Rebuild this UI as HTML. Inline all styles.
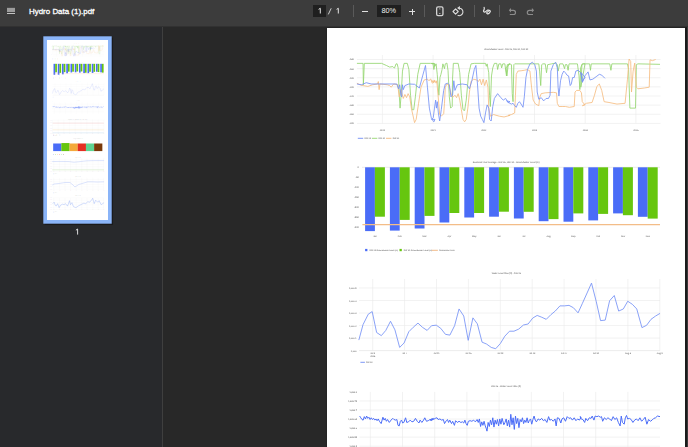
<!DOCTYPE html>
<html><head><meta charset="utf-8"><style>
html,body{margin:0;padding:0;}
body{width:688px;height:447px;overflow:hidden;position:relative;background:#282828;font-family:"Liberation Sans",sans-serif;}
#tb{position:absolute;left:0;top:0;width:688px;height:26px;background:#3c3c3c;z-index:5;}
#tbl{position:absolute;left:0;top:26px;width:688px;height:1px;background:#313131;z-index:5;}
#side{position:absolute;left:0;top:26px;width:162px;height:421px;background:#28292c;}
#div{position:absolute;left:162px;top:26px;width:1px;height:421px;background:#3f3f3f;}
#main{position:absolute;left:163px;top:26px;width:525px;height:421px;background:#282828;overflow:hidden;}
#page{position:absolute;left:164px;top:2px;width:358px;height:1055px;background:#fff;box-shadow:0 0 1.5px 0.5px rgba(0,0,0,.6);}
#thumbb{position:absolute;left:46.9px;top:13.9px;width:61.3px;height:180.6px;box-shadow:0 0 0 3.7px #8ab4f8, 0 0 1px 4.5px rgba(0,0,0,.35);background:#fff;}
.t{position:absolute;color:#fff;font-size:8px;line-height:8px;white-space:nowrap;}
svg text{font-family:"Liberation Sans",sans-serif;text-rendering:geometricPrecision;}
</style></head><body>
<svg width="0" height="0" style="position:absolute"><defs><g id="pg">
<text transform="translate(179.20,21.90) scale(0.1)" font-size="22.4" text-anchor="middle" fill="#7c7c7c" stroke="#7c7c7c" stroke-width="0.5">Groundwater Level - DW 26, DW 31, DW 32</text>
<line x1="30.00" y1="31.50" x2="333.50" y2="31.50" stroke="#e9e9e9" stroke-width="0.6"/>
<text transform="translate(26.90,32.40) scale(0.1)" font-size="23.0" text-anchor="end" fill="#7c7c7c" stroke="#7c7c7c" stroke-width="0.5">-140</text>
<line x1="30.00" y1="40.63" x2="333.50" y2="40.63" stroke="#e9e9e9" stroke-width="0.6"/>
<text transform="translate(26.90,41.53) scale(0.1)" font-size="23.0" text-anchor="end" fill="#7c7c7c" stroke="#7c7c7c" stroke-width="0.5">-160</text>
<line x1="30.00" y1="49.76" x2="333.50" y2="49.76" stroke="#e9e9e9" stroke-width="0.6"/>
<text transform="translate(26.90,50.66) scale(0.1)" font-size="23.0" text-anchor="end" fill="#7c7c7c" stroke="#7c7c7c" stroke-width="0.5">-180</text>
<line x1="30.00" y1="58.89" x2="333.50" y2="58.89" stroke="#e9e9e9" stroke-width="0.6"/>
<text transform="translate(26.90,59.79) scale(0.1)" font-size="23.0" text-anchor="end" fill="#7c7c7c" stroke="#7c7c7c" stroke-width="0.5">-200</text>
<line x1="30.00" y1="68.02" x2="333.50" y2="68.02" stroke="#e9e9e9" stroke-width="0.6"/>
<text transform="translate(26.90,68.92) scale(0.1)" font-size="23.0" text-anchor="end" fill="#7c7c7c" stroke="#7c7c7c" stroke-width="0.5">-220</text>
<line x1="30.00" y1="77.15" x2="333.50" y2="77.15" stroke="#e9e9e9" stroke-width="0.6"/>
<text transform="translate(26.90,78.05) scale(0.1)" font-size="23.0" text-anchor="end" fill="#7c7c7c" stroke="#7c7c7c" stroke-width="0.5">-240</text>
<line x1="30.00" y1="86.28" x2="333.50" y2="86.28" stroke="#e9e9e9" stroke-width="0.6"/>
<text transform="translate(26.90,87.18) scale(0.1)" font-size="23.0" text-anchor="end" fill="#7c7c7c" stroke="#7c7c7c" stroke-width="0.5">-260</text>
<line x1="30.00" y1="95.41" x2="333.50" y2="95.41" stroke="#e9e9e9" stroke-width="0.6"/>
<text transform="translate(26.90,96.31) scale(0.1)" font-size="23.0" text-anchor="end" fill="#7c7c7c" stroke="#7c7c7c" stroke-width="0.5">-280</text>
<line x1="55.40" y1="27.00" x2="55.40" y2="95.40" stroke="#e9e9e9" stroke-width="0.6"/>
<text transform="translate(55.40,102.50) scale(0.1)" font-size="23.0" text-anchor="middle" fill="#7c7c7c" stroke="#7c7c7c" stroke-width="0.5">2020</text>
<line x1="106.10" y1="27.00" x2="106.10" y2="95.40" stroke="#e9e9e9" stroke-width="0.6"/>
<text transform="translate(106.10,102.50) scale(0.1)" font-size="23.0" text-anchor="middle" fill="#7c7c7c" stroke="#7c7c7c" stroke-width="0.5">2021</text>
<line x1="156.80" y1="27.00" x2="156.80" y2="95.40" stroke="#e9e9e9" stroke-width="0.6"/>
<text transform="translate(156.80,102.50) scale(0.1)" font-size="23.0" text-anchor="middle" fill="#7c7c7c" stroke="#7c7c7c" stroke-width="0.5">2022</text>
<line x1="207.50" y1="27.00" x2="207.50" y2="95.40" stroke="#e9e9e9" stroke-width="0.6"/>
<text transform="translate(207.50,102.50) scale(0.1)" font-size="23.0" text-anchor="middle" fill="#7c7c7c" stroke="#7c7c7c" stroke-width="0.5">2023</text>
<line x1="258.20" y1="27.00" x2="258.20" y2="95.40" stroke="#e9e9e9" stroke-width="0.6"/>
<text transform="translate(258.20,102.50) scale(0.1)" font-size="23.0" text-anchor="middle" fill="#7c7c7c" stroke="#7c7c7c" stroke-width="0.5">2024</text>
<line x1="308.90" y1="27.00" x2="308.90" y2="95.40" stroke="#e9e9e9" stroke-width="0.6"/>
<text transform="translate(308.90,102.50) scale(0.1)" font-size="23.0" text-anchor="middle" fill="#7c7c7c" stroke="#7c7c7c" stroke-width="0.5">2025</text>
<path d="M29.93,35.37 L36.05,35.37 L36.37,56.78 L37.34,35.37 L54.56,35.37 L59.39,37.46 L62.61,39.07 L65.83,38.59 L67.44,40.20 L69.05,35.85 L70.17,35.85 L71.14,39.88 L72.27,67.24 L73.07,80.12 L74.36,64.02 L75.48,43.10 L77.09,35.37 L80.31,35.37 L81.92,41.49 L83.53,67.24 L85.14,81.73 L86.75,81.73 L88.36,68.85 L90.78,46.32 L93.19,35.37 L103.65,35.37 L106.07,35.85 L106.87,41.49 L108.00,35.85 L104.61,35.37 L107.02,35.37 L107.83,38.27 L109.12,35.85 L110.24,46.32 L111.85,67.24 L112.98,49.54 L113.95,46.32 L115.07,41.49 L115.88,35.85 L117.49,40.68 L118.29,35.85 L119.90,35.05 L121.03,42.29 L122.32,68.85 L123.60,80.12 L125.21,78.51 L125.54,51.14 L126.34,35.37 L131.17,35.37 L132.78,44.71 L134.39,67.24 L136.00,81.73 L137.61,82.53 L139.22,72.07 L141.63,46.32 L144.05,35.85 L147.27,35.37 L158.53,35.37 L159.34,38.27 L160.14,35.85 L161.75,44.71 L162.56,67.24 L163.36,78.51 L164.49,47.93 L165.78,39.88 L167.39,35.37 L169.80,35.37 L170.61,41.49 L171.89,35.85 L173.82,35.85 L174.63,39.88 L175.76,35.85 L177.85,35.85 L179.46,47.93 L180.26,36.66 L183.00,35.85 L178.80,39.88 L179.93,47.93 L181.22,36.66 L182.83,35.85 L184.44,36.66 L185.24,65.63 L186.05,73.68 L186.85,36.66 L187.66,35.85 L211.80,35.85 L212.61,43.10 L213.73,57.58 L214.70,36.66 L215.83,35.85 L218.24,35.85 L219.53,44.71 L220.66,36.66 L224.68,35.85 L228.70,35.05 L230.31,36.66 L231.12,43.10 L232.73,35.85 L235.95,35.85 L237.56,40.68 L238.36,36.66 L239.97,36.66 L241.10,42.29 L242.06,35.85 L250.43,35.85 L252.04,47.93 L252.85,61.61 L253.65,39.88 L255.26,35.85 L258.00,35.85 L253.80,59.19 L254.93,36.66 L256.22,35.85 L262.66,35.85 L263.46,42.29 L264.27,35.85 L282.78,35.85 L283.91,42.29 L284.87,35.85 L300.48,35.85 L301.61,41.49 L302.90,80.12 L308.53,80.12 L309.34,36.66 L310.95,35.85 L333.00,36.34" fill="none" stroke="#95d670" stroke-width="0.85" stroke-linejoin="round"/>
<path d="M29.93,55.17 L32.83,56.78 L36.05,57.58 L40.88,58.39 L45.71,56.78 L50.54,55.97 L51.34,53.56 L52.14,61.61 L52.95,55.97 L60.19,56.78 L62.61,57.58 L64.22,59.19 L66.63,55.97 L70.66,56.78 L72.27,68.85 L73.88,61.61 L76.29,70.46 L77.90,66.44 L79.51,69.66 L81.12,65.63 L82.73,68.85 L84.34,80.12 L87.56,94.61 L89.17,91.39 L91.58,75.29 L94.00,59.19 L97.22,51.95 L100.43,51.14 L102.04,52.75 L103.65,50.82 L105.26,55.17 L108.00,53.56 L104.61,52.75 L106.22,54.36 L107.51,51.95 L109.12,55.17 L109.76,52.75 L111.05,67.24 L112.66,86.56 L114.27,88.17 L116.68,85.75 L117.49,75.29 L118.29,59.19 L119.90,55.97 L121.51,56.78 L123.12,61.61 L124.73,68.05 L126.34,68.85 L127.95,67.24 L129.56,69.66 L131.17,65.63 L132.78,72.07 L134.39,81.73 L136.00,91.39 L137.61,93.80 L139.22,91.39 L140.83,80.12 L142.44,64.02 L144.05,53.56 L146.46,51.14 L149.68,51.95 L151.29,53.56 L152.90,51.14 L154.51,56.78 L156.12,51.14 L157.73,57.58 L159.34,51.95 L160.95,59.19 L161.75,80.12 L163.36,88.17 L166.58,86.56 L172.22,88.17 L177.04,88.97 L183.00,87.36 L181.22,87.36 L184.44,86.56 L187.66,84.95 L188.46,67.24 L189.27,46.32 L190.88,43.10 L194.10,42.77 L197.32,42.29 L200.54,41.49 L202.95,43.10 L204.56,59.19 L206.17,72.07 L208.58,76.09 L211.80,77.70 L212.61,69.66 L214.22,65.63 L218.24,64.83 L226.29,64.34 L229.51,64.83 L230.31,75.29 L231.92,78.51 L235.14,78.51 L238.36,78.51 L242.39,79.31 L247.22,78.51 L248.02,64.02 L249.63,62.41 L252.85,62.41 L254.46,64.83 L255.26,73.68 L258.00,76.90 L255.41,77.70 L259.44,75.29 L265.07,74.48 L267.49,67.24 L269.90,58.39 L272.32,55.97 L274.73,62.41 L277.14,73.68 L281.97,74.48 L290.02,76.09 L298.07,75.29 L300.48,51.14 L302.09,31.02 L303.70,33.44 L304.51,64.02 L306.12,43.10 L307.73,35.05 L309.34,59.19 L310.95,60.80 L317.39,60.00 L322.22,59.19 L323.02,31.83 L325.43,32.63 L328.65,31.51" fill="none" stroke="#f6bd82" stroke-width="0.85" stroke-linejoin="round"/>
<path d="M29.93,55.97 L34.44,56.78 L39.27,54.69 L44.10,55.97 L69.85,55.97 L71.46,60.80 L72.75,56.78 L73.88,67.24 L74.68,68.85 L75.48,56.78 L76.29,61.61 L77.90,57.58 L81.92,55.97 L87.56,56.30 L92.39,60.00 L95.61,47.93 L98.50,37.46 L100.43,59.19 L102.37,80.12 L104.46,90.58 L106.87,93.80 L108.00,91.39 L104.61,91.39 L106.22,89.78 L107.51,80.12 L108.63,72.07 L109.44,80.12 L110.24,73.68 L111.37,84.95 L112.66,93.00 L114.27,81.73 L116.68,62.41 L118.29,55.97 L120.71,55.17 L122.32,56.78 L123.93,68.85 L125.54,67.24 L126.82,52.75 L127.95,62.41 L130.36,56.78 L135.19,55.97 L140.02,56.78 L142.44,60.80 L144.85,52.75 L147.27,41.49 L148.88,37.46 L150.48,55.97 L152.09,80.12 L153.70,88.17 L155.31,91.39 L156.92,94.61 L158.53,84.95 L160.14,76.90 L161.75,80.12 L162.56,91.39 L164.17,93.00 L165.78,78.51 L167.39,70.46 L170.61,65.63 L173.82,69.66 L176.24,72.07 L178.65,70.46 L181.07,74.48 L183.00,73.68 L179.61,72.88 L181.22,74.48 L182.83,75.29 L184.44,76.09 L186.05,75.29 L187.66,77.70 L189.27,79.31 L190.88,75.29 L192.49,73.68 L194.10,76.09 L196.03,79.31 L197.32,68.85 L198.93,49.54 L200.54,41.49 L202.95,35.85 L205.36,34.24 L207.78,36.66 L209.39,43.10 L210.19,64.02 L211.80,71.27 L214.22,69.66 L216.63,72.88 L219.05,70.46 L221.46,70.46 L223.07,67.24 L223.88,43.10 L226.29,36.66 L228.70,34.24 L230.31,39.88 L231.12,59.19 L231.92,68.05 L233.53,52.75 L235.14,46.32 L236.75,43.10 L238.36,44.71 L239.97,47.12 L241.58,47.93 L243.19,57.58 L244.32,55.97 L245.61,49.54 L247.22,49.54 L248.82,43.10 L251.24,42.29 L253.65,44.71 L255.26,53.56 L258.00,49.54 L254.29,44.71 L255.41,54.36 L257.83,47.93 L261.05,43.90 L262.98,51.95 L265.88,51.14 L269.10,48.73 L272.32,46.32 L274.73,47.12 L277.95,50.34" fill="none" stroke="#7591f5" stroke-width="0.85" stroke-linejoin="round"/>
<line x1="30.80" y1="110.30" x2="36.20" y2="110.30" stroke="#6e8cf5" stroke-width="0.9"/>
<text transform="translate(37.50,111.10) scale(0.1)" font-size="21.0" text-anchor="start" fill="#7c7c7c" stroke="#7c7c7c" stroke-width="0.5">DW 26</text>
<line x1="44.90" y1="110.30" x2="50.30" y2="110.30" stroke="#95d670" stroke-width="0.9"/>
<text transform="translate(51.60,111.10) scale(0.1)" font-size="21.0" text-anchor="start" fill="#7c7c7c" stroke="#7c7c7c" stroke-width="0.5">DW 31</text>
<line x1="59.00" y1="110.30" x2="64.40" y2="110.30" stroke="#f5b97a" stroke-width="0.9"/>
<text transform="translate(65.70,111.10) scale(0.1)" font-size="21.0" text-anchor="start" fill="#7c7c7c" stroke="#7c7c7c" stroke-width="0.5">DW 32</text>
<text transform="translate(179.10,134.60) scale(0.1)" font-size="23.0" text-anchor="middle" fill="#7c7c7c" stroke="#7c7c7c" stroke-width="0.5">Seasonal Year Average - DW 26, DW 31 - Groundwater Level (m)</text>
<text transform="translate(32.00,140.30) scale(0.1)" font-size="25.0" text-anchor="end" fill="#7c7c7c" stroke="#7c7c7c" stroke-width="0.5">0</text>
<text transform="translate(32.00,150.20) scale(0.1)" font-size="25.0" text-anchor="end" fill="#7c7c7c" stroke="#7c7c7c" stroke-width="0.5">-50</text>
<text transform="translate(32.00,160.10) scale(0.1)" font-size="25.0" text-anchor="end" fill="#7c7c7c" stroke="#7c7c7c" stroke-width="0.5">-100</text>
<text transform="translate(32.00,170.00) scale(0.1)" font-size="25.0" text-anchor="end" fill="#7c7c7c" stroke="#7c7c7c" stroke-width="0.5">-150</text>
<text transform="translate(32.00,179.90) scale(0.1)" font-size="25.0" text-anchor="end" fill="#7c7c7c" stroke="#7c7c7c" stroke-width="0.5">-200</text>
<text transform="translate(32.00,189.80) scale(0.1)" font-size="25.0" text-anchor="end" fill="#7c7c7c" stroke="#7c7c7c" stroke-width="0.5">-250</text>
<text transform="translate(32.00,199.70) scale(0.1)" font-size="25.0" text-anchor="end" fill="#7c7c7c" stroke="#7c7c7c" stroke-width="0.5">-300</text>
<line x1="35.00" y1="139.30" x2="333.00" y2="139.30" stroke="#dddddd" stroke-width="0.6"/>
<rect x="38.10" y="139.30" width="9.8" height="63.80" fill="#4a6cf7"/>
<rect x="47.90" y="139.30" width="10" height="49.40" fill="#66c60f"/>
<text transform="translate(48.00,208.80) scale(0.1)" font-size="23.0" text-anchor="middle" fill="#7c7c7c" stroke="#7c7c7c" stroke-width="0.5">Jan</text>
<rect x="62.90" y="139.30" width="9.8" height="63.30" fill="#4a6cf7"/>
<rect x="72.70" y="139.30" width="10" height="52.60" fill="#66c60f"/>
<text transform="translate(72.80,208.80) scale(0.1)" font-size="23.0" text-anchor="middle" fill="#7c7c7c" stroke="#7c7c7c" stroke-width="0.5">Feb</text>
<rect x="87.70" y="139.30" width="9.8" height="61.20" fill="#4a6cf7"/>
<rect x="97.50" y="139.30" width="10" height="48.60" fill="#66c60f"/>
<text transform="translate(97.60,208.80) scale(0.1)" font-size="23.0" text-anchor="middle" fill="#7c7c7c" stroke="#7c7c7c" stroke-width="0.5">Mar</text>
<rect x="112.50" y="139.30" width="9.8" height="55.20" fill="#4a6cf7"/>
<rect x="122.30" y="139.30" width="10" height="45.70" fill="#66c60f"/>
<text transform="translate(122.40,208.80) scale(0.1)" font-size="23.0" text-anchor="middle" fill="#7c7c7c" stroke="#7c7c7c" stroke-width="0.5">Apr</text>
<rect x="137.30" y="139.30" width="9.8" height="50.20" fill="#4a6cf7"/>
<rect x="147.10" y="139.30" width="10" height="45.70" fill="#66c60f"/>
<text transform="translate(147.20,208.80) scale(0.1)" font-size="23.0" text-anchor="middle" fill="#7c7c7c" stroke="#7c7c7c" stroke-width="0.5">May</text>
<rect x="162.10" y="139.30" width="9.8" height="49.40" fill="#4a6cf7"/>
<rect x="171.90" y="139.30" width="10" height="44.40" fill="#66c60f"/>
<text transform="translate(172.00,208.80) scale(0.1)" font-size="23.0" text-anchor="middle" fill="#7c7c7c" stroke="#7c7c7c" stroke-width="0.5">Jun</text>
<rect x="186.90" y="139.30" width="9.8" height="51.20" fill="#4a6cf7"/>
<rect x="196.70" y="139.30" width="10" height="44.50" fill="#66c60f"/>
<text transform="translate(196.80,208.80) scale(0.1)" font-size="23.0" text-anchor="middle" fill="#7c7c7c" stroke="#7c7c7c" stroke-width="0.5">Jul</text>
<rect x="211.70" y="139.30" width="9.8" height="53.90" fill="#4a6cf7"/>
<rect x="221.50" y="139.30" width="10" height="51.80" fill="#66c60f"/>
<text transform="translate(221.60,208.80) scale(0.1)" font-size="23.0" text-anchor="middle" fill="#7c7c7c" stroke="#7c7c7c" stroke-width="0.5">Aug</text>
<rect x="236.50" y="139.30" width="9.8" height="54.40" fill="#4a6cf7"/>
<rect x="246.30" y="139.30" width="10" height="46.10" fill="#66c60f"/>
<text transform="translate(246.40,208.80) scale(0.1)" font-size="23.0" text-anchor="middle" fill="#7c7c7c" stroke="#7c7c7c" stroke-width="0.5">Sep</text>
<rect x="261.30" y="139.30" width="9.8" height="53.10" fill="#4a6cf7"/>
<rect x="271.10" y="139.30" width="10" height="46.60" fill="#66c60f"/>
<text transform="translate(271.20,208.80) scale(0.1)" font-size="23.0" text-anchor="middle" fill="#7c7c7c" stroke="#7c7c7c" stroke-width="0.5">Oct</text>
<rect x="286.10" y="139.30" width="9.8" height="46.10" fill="#4a6cf7"/>
<rect x="295.90" y="139.30" width="10" height="47.90" fill="#66c60f"/>
<text transform="translate(296.00,208.80) scale(0.1)" font-size="23.0" text-anchor="middle" fill="#7c7c7c" stroke="#7c7c7c" stroke-width="0.5">Nov</text>
<rect x="310.90" y="139.30" width="9.8" height="49.50" fill="#4a6cf7"/>
<rect x="320.70" y="139.30" width="10" height="51.30" fill="#66c60f"/>
<text transform="translate(320.80,208.80) scale(0.1)" font-size="23.0" text-anchor="middle" fill="#7c7c7c" stroke="#7c7c7c" stroke-width="0.5">Dec</text>
<line x1="35.40" y1="196.60" x2="333.00" y2="196.60" stroke="#f3bd88" stroke-width="1.2"/>
<rect x="38.10000000000002" y="220.9" width="2.3" height="2.3" fill="#4a6cf7"/>
<text transform="translate(42.50,223.00) scale(0.1)" font-size="21.0" text-anchor="start" fill="#7c7c7c" stroke="#7c7c7c" stroke-width="0.5">DW 26 Groundwater Level (m)</text>
<rect x="72.5" y="220.9" width="2.3" height="2.3" fill="#66c60f"/>
<text transform="translate(76.80,223.00) scale(0.1)" font-size="21.0" text-anchor="start" fill="#7c7c7c" stroke="#7c7c7c" stroke-width="0.5">DW 31 Groundwater Level (m)</text>
<line x1="104.80" y1="222.30" x2="110.90" y2="222.30" stroke="#f0b27c" stroke-width="0.9"/>
<text transform="translate(112.10,223.00) scale(0.1)" font-size="21.0" text-anchor="start" fill="#7c7c7c" stroke="#7c7c7c" stroke-width="0.5">Abstraction Limit</text>
<text transform="translate(179.30,246.30) scale(0.1)" font-size="22.4" text-anchor="middle" fill="#7c7c7c" stroke="#7c7c7c" stroke-width="0.5">Water Level Rise (ft) - DW 26</text>
<line x1="32.00" y1="260.00" x2="333.00" y2="260.00" stroke="#e9e9e9" stroke-width="0.6"/>
<text transform="translate(29.50,261.00) scale(0.1)" font-size="22.5" text-anchor="end" fill="#7c7c7c" stroke="#7c7c7c" stroke-width="0.5">1,000.5</text>
<line x1="32.00" y1="272.52" x2="333.00" y2="272.52" stroke="#e9e9e9" stroke-width="0.6"/>
<text transform="translate(29.50,273.52) scale(0.1)" font-size="22.5" text-anchor="end" fill="#7c7c7c" stroke="#7c7c7c" stroke-width="0.5">1,000.4</text>
<line x1="32.00" y1="285.04" x2="333.00" y2="285.04" stroke="#e9e9e9" stroke-width="0.6"/>
<text transform="translate(29.50,286.04) scale(0.1)" font-size="22.5" text-anchor="end" fill="#7c7c7c" stroke="#7c7c7c" stroke-width="0.5">1,000.3</text>
<line x1="32.00" y1="297.56" x2="333.00" y2="297.56" stroke="#e9e9e9" stroke-width="0.6"/>
<text transform="translate(29.50,298.56) scale(0.1)" font-size="22.5" text-anchor="end" fill="#7c7c7c" stroke="#7c7c7c" stroke-width="0.5">1,000.2</text>
<line x1="32.00" y1="310.08" x2="333.00" y2="310.08" stroke="#e9e9e9" stroke-width="0.6"/>
<text transform="translate(29.50,311.08) scale(0.1)" font-size="22.5" text-anchor="end" fill="#7c7c7c" stroke="#7c7c7c" stroke-width="0.5">1,000.1</text>
<line x1="32.00" y1="322.60" x2="333.00" y2="322.60" stroke="#e9e9e9" stroke-width="0.6"/>
<text transform="translate(29.50,323.60) scale(0.1)" font-size="22.5" text-anchor="end" fill="#7c7c7c" stroke="#7c7c7c" stroke-width="0.5">1,000</text>
<line x1="32.00" y1="322.60" x2="333.00" y2="322.60" stroke="#e9e9e9" stroke-width="0.6"/>
<line x1="45.70" y1="251.00" x2="45.70" y2="322.60" stroke="#e9e9e9" stroke-width="0.6"/>
<text transform="translate(45.70,326.20) scale(0.1)" font-size="23.0" text-anchor="middle" fill="#7c7c7c" stroke="#7c7c7c" stroke-width="0.5">Jul 3</text>
<line x1="77.60" y1="251.00" x2="77.60" y2="322.60" stroke="#e9e9e9" stroke-width="0.6"/>
<text transform="translate(77.60,326.20) scale(0.1)" font-size="23.0" text-anchor="middle" fill="#7c7c7c" stroke="#7c7c7c" stroke-width="0.5">Jul 7</text>
<line x1="109.50" y1="251.00" x2="109.50" y2="322.60" stroke="#e9e9e9" stroke-width="0.6"/>
<text transform="translate(109.50,326.20) scale(0.1)" font-size="23.0" text-anchor="middle" fill="#7c7c7c" stroke="#7c7c7c" stroke-width="0.5">Jul 11</text>
<line x1="141.40" y1="251.00" x2="141.40" y2="322.60" stroke="#e9e9e9" stroke-width="0.6"/>
<text transform="translate(141.40,326.20) scale(0.1)" font-size="23.0" text-anchor="middle" fill="#7c7c7c" stroke="#7c7c7c" stroke-width="0.5">Jul 15</text>
<line x1="173.30" y1="251.00" x2="173.30" y2="322.60" stroke="#e9e9e9" stroke-width="0.6"/>
<text transform="translate(173.30,326.20) scale(0.1)" font-size="23.0" text-anchor="middle" fill="#7c7c7c" stroke="#7c7c7c" stroke-width="0.5">Jul 19</text>
<line x1="205.20" y1="251.00" x2="205.20" y2="322.60" stroke="#e9e9e9" stroke-width="0.6"/>
<text transform="translate(205.20,326.20) scale(0.1)" font-size="23.0" text-anchor="middle" fill="#7c7c7c" stroke="#7c7c7c" stroke-width="0.5">Jul 23</text>
<line x1="237.10" y1="251.00" x2="237.10" y2="322.60" stroke="#e9e9e9" stroke-width="0.6"/>
<text transform="translate(237.10,326.20) scale(0.1)" font-size="23.0" text-anchor="middle" fill="#7c7c7c" stroke="#7c7c7c" stroke-width="0.5">Jul 27</text>
<line x1="269.00" y1="251.00" x2="269.00" y2="322.60" stroke="#e9e9e9" stroke-width="0.6"/>
<text transform="translate(269.00,326.20) scale(0.1)" font-size="23.0" text-anchor="middle" fill="#7c7c7c" stroke="#7c7c7c" stroke-width="0.5">Jul 31</text>
<line x1="300.90" y1="251.00" x2="300.90" y2="322.60" stroke="#e9e9e9" stroke-width="0.6"/>
<text transform="translate(300.90,326.20) scale(0.1)" font-size="23.0" text-anchor="middle" fill="#7c7c7c" stroke="#7c7c7c" stroke-width="0.5">Aug 4</text>
<line x1="332.80" y1="251.00" x2="332.80" y2="322.60" stroke="#e9e9e9" stroke-width="0.6"/>
<text transform="translate(332.80,326.20) scale(0.1)" font-size="23.0" text-anchor="middle" fill="#7c7c7c" stroke="#7c7c7c" stroke-width="0.5">Aug 8</text>
<text transform="translate(45.70,329.20) scale(0.1)" font-size="23.0" text-anchor="middle" fill="#7c7c7c" stroke="#7c7c7c" stroke-width="0.5">2024</text>
<path d="M31.84,312.09 L36.02,296.65 L41.26,286.19 L45.18,283.57 L49.63,304.50 L54.34,307.64 L58.79,302.41 L63.50,293.25 L67.95,301.89 L72.65,319.42 L77.10,314.97 L81.81,303.72 L86.26,299.27 L90.97,295.08 L95.42,299.27 L100.13,302.41 L104.58,297.70 L109.28,297.18 L113.73,300.32 L118.44,306.34 L122.89,307.12 L127.60,297.70 L132.05,280.96 L136.76,288.02 L141.21,312.35 L145.91,289.85 L150.36,295.87 L155.07,314.18 L159.52,316.02 L164.23,319.42 L168.68,320.73 L173.39,315.49 L177.84,308.17 L182.54,303.20 L186.99,303.20 L191.70,301.10 L196.45,297.03 L201.11,295.99 L205.77,290.04 L210.17,287.45 L214.82,289.26 L219.22,291.33 L223.88,286.68 L228.28,283.05 L232.94,277.88 L237.33,277.88 L241.99,277.36 L246.39,279.69 L251.05,284.87 L255.45,275.29 L260.10,264.94 L264.50,255.11 L269.16,273.22 L273.56,292.63 L278.21,292.11 L282.61,272.71 L287.27,267.53 L291.67,283.05 L296.32,280.98 L300.72,273.22 L305.38,276.33 L309.78,280.98 L314.95,299.61 L319.61,297.28 L324.01,291.33 L328.67,287.97 L333.06,285.38" fill="none" stroke="#7591f5" stroke-width="0.85" stroke-linejoin="round"/>
<line x1="33.40" y1="334.30" x2="37.90" y2="334.30" stroke="#6e8cf5" stroke-width="0.9"/>
<text transform="translate(39.00,335.10) scale(0.1)" font-size="21.0" text-anchor="start" fill="#7c7c7c" stroke="#7c7c7c" stroke-width="0.5">DW 26</text>
<text transform="translate(179.00,359.00) scale(0.1)" font-size="23.0" text-anchor="middle" fill="#7c7c7c" stroke="#7c7c7c" stroke-width="0.5">DW 26 - Water Level Rise (ft)</text>
<text transform="translate(30.00,364.90) scale(0.1)" font-size="22.5" text-anchor="end" fill="#7c7c7c" stroke="#7c7c7c" stroke-width="0.5">1,333.8</text>
<line x1="32.50" y1="372.95" x2="333.00" y2="372.95" stroke="#e9e9e9" stroke-width="0.6"/>
<text transform="translate(30.00,373.95) scale(0.1)" font-size="22.5" text-anchor="end" fill="#7c7c7c" stroke="#7c7c7c" stroke-width="0.5">1,333.75</text>
<line x1="32.50" y1="382.00" x2="333.00" y2="382.00" stroke="#e9e9e9" stroke-width="0.6"/>
<text transform="translate(30.00,383.00) scale(0.1)" font-size="22.5" text-anchor="end" fill="#7c7c7c" stroke="#7c7c7c" stroke-width="0.5">1,333.7</text>
<line x1="32.50" y1="391.05" x2="333.00" y2="391.05" stroke="#e9e9e9" stroke-width="0.6"/>
<text transform="translate(30.00,392.05) scale(0.1)" font-size="22.5" text-anchor="end" fill="#7c7c7c" stroke="#7c7c7c" stroke-width="0.5">1,333.65</text>
<line x1="32.50" y1="400.10" x2="333.00" y2="400.10" stroke="#e9e9e9" stroke-width="0.6"/>
<text transform="translate(30.00,401.10) scale(0.1)" font-size="22.5" text-anchor="end" fill="#7c7c7c" stroke="#7c7c7c" stroke-width="0.5">1,333.6</text>
<line x1="32.50" y1="409.15" x2="333.00" y2="409.15" stroke="#e9e9e9" stroke-width="0.6"/>
<text transform="translate(30.00,410.15) scale(0.1)" font-size="22.5" text-anchor="end" fill="#7c7c7c" stroke="#7c7c7c" stroke-width="0.5">1,333.55</text>
<line x1="32.50" y1="418.20" x2="333.00" y2="418.20" stroke="#e9e9e9" stroke-width="0.6"/>
<text transform="translate(30.00,419.20) scale(0.1)" font-size="22.5" text-anchor="end" fill="#7c7c7c" stroke="#7c7c7c" stroke-width="0.5">1,333.5</text>
<line x1="43.30" y1="363.90" x2="43.30" y2="432.00" stroke="#e9e9e9" stroke-width="0.6"/>
<line x1="75.50" y1="363.90" x2="75.50" y2="432.00" stroke="#e9e9e9" stroke-width="0.6"/>
<line x1="107.70" y1="363.90" x2="107.70" y2="432.00" stroke="#e9e9e9" stroke-width="0.6"/>
<line x1="139.90" y1="363.90" x2="139.90" y2="432.00" stroke="#e9e9e9" stroke-width="0.6"/>
<line x1="172.10" y1="363.90" x2="172.10" y2="432.00" stroke="#e9e9e9" stroke-width="0.6"/>
<line x1="204.30" y1="363.90" x2="204.30" y2="432.00" stroke="#e9e9e9" stroke-width="0.6"/>
<line x1="236.50" y1="363.90" x2="236.50" y2="432.00" stroke="#e9e9e9" stroke-width="0.6"/>
<line x1="268.70" y1="363.90" x2="268.70" y2="432.00" stroke="#e9e9e9" stroke-width="0.6"/>
<line x1="300.90" y1="363.90" x2="300.90" y2="432.00" stroke="#e9e9e9" stroke-width="0.6"/>
<path d="M32.65,388.05 L33.81,389.79 L34.98,391.53 L36.14,392.12 L37.30,388.63 L38.47,390.95 L39.63,388.05 L40.79,390.37 L41.95,389.21 L43.12,391.53 L44.28,389.79 L45.44,391.53 L46.60,390.37 L47.77,392.12 L48.93,390.95 L50.09,392.70 L51.26,390.95 L52.42,393.28 L54.16,395.60 L55.91,389.21 L57.07,392.12 L58.23,390.37 L59.40,393.28 L60.56,391.53 L62.30,394.44 L64.05,392.12 L65.79,390.37 L66.95,391.53 L68.70,392.12 L69.86,391.53 L71.02,397.35 L72.19,397.93 L73.35,393.28 L74.51,392.12 L75.67,395.02 L76.84,394.44 L78.58,389.79 L79.74,394.44 L81.49,393.86 L83.23,392.12 L84.98,393.86 L86.72,393.28 L88.47,390.37 L90.21,393.28 L91.95,395.02 L93.12,392.12 L94.86,394.44 L96.60,392.12 L97.77,389.79 L99.51,393.28 L101.26,392.70 L103.00,391.53 L104.74,392.70 L106.49,390.37 L103.00,392.12 L104.74,390.95 L106.49,391.53 L108.23,390.37 L109.98,389.79 L111.14,391.53 L112.88,390.95 L114.63,392.12 L116.37,391.53 L117.53,395.60 L119.28,392.70 L120.44,391.53 L121.60,394.44 L122.77,392.12 L124.51,395.60 L125.67,393.28 L127.42,397.35 L128.58,392.70 L130.33,394.44 L132.07,393.28 L133.81,394.44 L135.56,393.86 L136.72,395.02 L137.88,392.12 L139.05,395.60 L140.21,397.35 L141.37,393.28 L143.12,392.70 L144.86,393.28 L146.60,392.12 L148.35,393.86 L150.09,391.53 L151.26,394.44 L152.42,390.95 L153.58,398.51 L154.74,393.86 L155.91,397.35 L157.07,393.28 L158.23,397.93 L159.40,400.84 L159.98,403.16 L161.14,394.44 L162.30,398.51 L163.47,392.12 L164.63,396.77 L165.79,389.79 L166.95,399.09 L168.12,392.12 L169.28,396.19 L170.44,391.53 L171.60,397.93 L172.77,390.95 L173.93,396.19 L175.09,390.37 L176.84,396.77 L178.00,394.44 L179.16,390.95 L180.33,397.93 L181.49,392.12 L182.65,399.09 L183.81,386.30 L184.98,396.77 L186.14,389.79 L187.30,401.42 L188.47,388.05 L189.63,395.60 L190.79,390.37 L191.95,399.67 L193.12,391.53 L194.28,393.86 L195.44,389.79 L196.60,395.60 L197.77,392.12 L198.93,394.44 L200.09,389.79 L201.26,395.02 L202.42,392.12 L203.58,390.95 L204.74,396.19 L205.91,391.53 L207.07,388.05 L208.23,392.12 L209.40,393.86 L211.14,390.95 L212.88,392.12 L214.63,390.37 L216.37,392.70 L218.12,391.53 L219.86,394.44 L221.60,388.63 L222.77,392.12 L224.51,391.53 L226.26,393.28 L228.00,390.95 L229.16,397.93 L230.33,389.79 L232.07,390.37 L233.81,395.02 L234.98,390.95 L236.72,389.79 L238.47,393.28 L240.21,388.63 L241.95,390.37 L243.70,389.79 L245.44,392.12 L247.19,389.79 L248.93,392.70 L250.67,390.95 L252.42,392.12 L254.16,389.21 L253.00,388.63 L254.16,390.95 L255.91,391.53 L257.65,394.44 L258.81,390.37 L260.56,392.70 L262.30,389.79 L264.05,390.37 L265.21,388.05 L266.95,392.12 L268.12,388.05 L269.86,388.63 L271.60,388.05 L273.35,389.21 L274.51,388.63 L275.67,393.28 L277.42,389.79 L279.16,391.53 L280.91,389.79 L282.65,390.95 L284.40,392.70 L286.14,388.63 L287.88,391.53 L289.63,389.79 L291.37,394.44 L293.12,397.93 L294.28,388.05 L295.44,394.44 L297.19,396.19 L298.35,389.79 L299.51,387.47 L300.67,390.95 L302.42,390.37 L304.16,391.53 L305.91,394.44 L307.65,392.12 L309.40,390.95 L311.14,392.70 L312.88,389.79 L314.63,393.28 L316.37,391.53 L318.12,389.21 L319.86,396.19 L321.60,391.53 L323.35,393.28 L325.09,392.12 L326.84,390.37 L328.58,389.79 L330.33,388.05 L333.00,388.63" fill="none" stroke="#4a6cf7" stroke-width="1.0" stroke-linejoin="round"/>
<text x="179.0" y="470.0" font-size="4.6" text-anchor="middle" fill="#a0a0a0">Groundwater Level Comparison - DW 26, DW 31, DW 32</text>
<line x1="33.0" y1="469.6" x2="332.0" y2="469.6" stroke="#eeeeee" stroke-width="1.0"/>
<text x="29.0" y="471.1" font-size="4.5" text-anchor="end" fill="#a0a0a0">1,000</text>
<line x1="33.0" y1="485.0" x2="332.0" y2="485.0" stroke="#eeeeee" stroke-width="1.0"/>
<text x="29.0" y="486.5" font-size="4.5" text-anchor="end" fill="#a0a0a0">1,000</text>
<line x1="33.0" y1="500.7" x2="332.0" y2="500.7" stroke="#eeeeee" stroke-width="1.0"/>
<text x="29.0" y="502.2" font-size="4.5" text-anchor="end" fill="#a0a0a0">1,000</text>
<line x1="33.0" y1="515.8" x2="332.0" y2="515.8" stroke="#eeeeee" stroke-width="1.0"/>
<text x="29.0" y="517.3" font-size="4.5" text-anchor="end" fill="#a0a0a0">1,000</text>
<line x1="33.0" y1="530.4" x2="332.0" y2="530.4" stroke="#eeeeee" stroke-width="1.0"/>
<text x="29.0" y="531.9" font-size="4.5" text-anchor="end" fill="#a0a0a0">1,000</text>
<line x1="33.0" y1="545.0" x2="332.0" y2="545.0" stroke="#eeeeee" stroke-width="1.0"/>
<text x="29.0" y="546.5" font-size="4.5" text-anchor="end" fill="#a0a0a0">1,000</text>
<line x1="33.0" y1="465.0" x2="33.0" y2="545.0" stroke="#eeeeee" stroke-width="1.0"/>
<line x1="66.2" y1="465.0" x2="66.2" y2="545.0" stroke="#eeeeee" stroke-width="1.0"/>
<line x1="99.4" y1="465.0" x2="99.4" y2="545.0" stroke="#eeeeee" stroke-width="1.0"/>
<line x1="132.6" y1="465.0" x2="132.6" y2="545.0" stroke="#eeeeee" stroke-width="1.0"/>
<line x1="165.8" y1="465.0" x2="165.8" y2="545.0" stroke="#eeeeee" stroke-width="1.0"/>
<line x1="199.0" y1="465.0" x2="199.0" y2="545.0" stroke="#eeeeee" stroke-width="1.0"/>
<line x1="232.2" y1="465.0" x2="232.2" y2="545.0" stroke="#eeeeee" stroke-width="1.0"/>
<line x1="265.4" y1="465.0" x2="265.4" y2="545.0" stroke="#eeeeee" stroke-width="1.0"/>
<line x1="298.6" y1="465.0" x2="298.6" y2="545.0" stroke="#eeeeee" stroke-width="1.0"/>
<line x1="331.8" y1="465.0" x2="331.8" y2="545.0" stroke="#eeeeee" stroke-width="1.0"/>
<path d="M33.0,485.7 L332.0,485.7" fill="none" stroke="#f2a8a8" stroke-width="1.7" stroke-linejoin="round"/>
<path d="M33.0,524.6 L332.0,524.6" fill="none" stroke="#f6d496" stroke-width="1.7" stroke-linejoin="round"/>
<path d="M33.0,542.0 L332.0,542.0" fill="none" stroke="#a6cdea" stroke-width="1.7" stroke-linejoin="round"/>
<line x1="36.0" y1="554.9" x2="41.0" y2="554.9" stroke="#f2a0a0" stroke-width="2"/>
<line x1="54.0" y1="554.9" x2="59.0" y2="554.9" stroke="#f6d08a" stroke-width="2"/>
<line x1="72.0" y1="554.9" x2="77.0" y2="554.9" stroke="#9cc8e8" stroke-width="2"/>
<text x="181.0" y="580.0" font-size="4.6" text-anchor="middle" fill="#a0a0a0">Average Groundwater Level</text>
<rect x="36.0" y="604.6" width="48.1" height="44.4" fill="#4a6cf7"/>
<rect x="83.8" y="602" width="48.1" height="47.0" fill="#66c60f"/>
<rect x="131.7" y="604.6" width="48.1" height="44.4" fill="#f4a93a"/>
<rect x="179.5" y="604.6" width="48.1" height="44.4" fill="#e52e22"/>
<rect x="227.3" y="604.6" width="48.1" height="44.4" fill="#5ed492"/>
<rect x="275.2" y="604.6" width="48.1" height="44.4" fill="#7a3a0a"/>
<rect x="36.0" y="666" width="3" height="3" fill="#4a6cf7"/>
<rect x="48.0" y="666" width="3" height="3" fill="#66c60f"/>
<rect x="60.0" y="666" width="3" height="3" fill="#f4a93a"/>
<rect x="72.0" y="666" width="3" height="3" fill="#e52e22"/>
<rect x="84.0" y="666" width="3" height="3" fill="#5ed492"/>
<rect x="96.0" y="666" width="3" height="3" fill="#7a3a0a"/>
<text x="181.0" y="689.0" font-size="4.8" text-anchor="middle" fill="#a0a0a0">Water Level (ft)</text>
<line x1="33.0" y1="696.8" x2="332.0" y2="696.8" stroke="#eeeeee" stroke-width="1.0"/>
<line x1="33.0" y1="711.4" x2="332.0" y2="711.4" stroke="#eeeeee" stroke-width="1.0"/>
<line x1="33.0" y1="725.5" x2="332.0" y2="725.5" stroke="#eeeeee" stroke-width="1.0"/>
<line x1="33.0" y1="740.1" x2="332.0" y2="740.1" stroke="#eeeeee" stroke-width="1.0"/>
<line x1="33.0" y1="754.7" x2="332.0" y2="754.7" stroke="#eeeeee" stroke-width="1.0"/>
<line x1="33.0" y1="768.7" x2="332.0" y2="768.7" stroke="#eeeeee" stroke-width="1.0"/>
<line x1="39.1" y1="691.6" x2="39.1" y2="768.7" stroke="#eeeeee" stroke-width="1.0"/>
<line x1="73.7" y1="691.6" x2="73.7" y2="768.7" stroke="#eeeeee" stroke-width="1.0"/>
<line x1="105.4" y1="691.6" x2="105.4" y2="768.7" stroke="#eeeeee" stroke-width="1.0"/>
<line x1="137.2" y1="691.6" x2="137.2" y2="768.7" stroke="#eeeeee" stroke-width="1.0"/>
<line x1="170.1" y1="691.6" x2="170.1" y2="768.7" stroke="#eeeeee" stroke-width="1.0"/>
<line x1="202.4" y1="691.6" x2="202.4" y2="768.7" stroke="#eeeeee" stroke-width="1.0"/>
<line x1="234.2" y1="691.6" x2="234.2" y2="768.7" stroke="#eeeeee" stroke-width="1.0"/>
<line x1="267.1" y1="691.6" x2="267.1" y2="768.7" stroke="#eeeeee" stroke-width="1.0"/>
<line x1="298.8" y1="691.6" x2="298.8" y2="768.7" stroke="#eeeeee" stroke-width="1.0"/>
<line x1="330.5" y1="691.6" x2="330.5" y2="768.7" stroke="#eeeeee" stroke-width="1.0"/>
<path d="M30.4,710.1 L70.8,709.5 L128.5,710.1 L157.4,714.1 L186.2,711.2 L232.4,705.5 L272.8,704.3 L333.4,704.3" fill="none" stroke="#8aa6f7" stroke-width="1.7" stroke-linejoin="round"/>
<path d="M30.4,758.6 L333.4,758.6" fill="none" stroke="#a8dc8a" stroke-width="1.7" stroke-linejoin="round"/>
<text x="181.0" y="799.0" font-size="4.8" text-anchor="middle" fill="#a0a0a0">Water Level (ft)</text>
<line x1="33.0" y1="815.4" x2="332.0" y2="815.4" stroke="#eeeeee" stroke-width="1.0"/>
<line x1="33.0" y1="829.4" x2="332.0" y2="829.4" stroke="#eeeeee" stroke-width="1.0"/>
<line x1="33.0" y1="844.0" x2="332.0" y2="844.0" stroke="#eeeeee" stroke-width="1.0"/>
<line x1="33.0" y1="858.6" x2="332.0" y2="858.6" stroke="#eeeeee" stroke-width="1.0"/>
<line x1="33.0" y1="872.7" x2="332.0" y2="872.7" stroke="#eeeeee" stroke-width="1.0"/>
<line x1="39.1" y1="805.5" x2="39.1" y2="875.6" stroke="#eeeeee" stroke-width="1.0"/>
<line x1="73.7" y1="805.5" x2="73.7" y2="875.6" stroke="#eeeeee" stroke-width="1.0"/>
<line x1="105.4" y1="805.5" x2="105.4" y2="875.6" stroke="#eeeeee" stroke-width="1.0"/>
<line x1="137.2" y1="805.5" x2="137.2" y2="875.6" stroke="#eeeeee" stroke-width="1.0"/>
<line x1="170.1" y1="805.5" x2="170.1" y2="875.6" stroke="#eeeeee" stroke-width="1.0"/>
<line x1="202.4" y1="805.5" x2="202.4" y2="875.6" stroke="#eeeeee" stroke-width="1.0"/>
<line x1="234.2" y1="805.5" x2="234.2" y2="875.6" stroke="#eeeeee" stroke-width="1.0"/>
<line x1="267.1" y1="805.5" x2="267.1" y2="875.6" stroke="#eeeeee" stroke-width="1.0"/>
<line x1="298.8" y1="805.5" x2="298.8" y2="875.6" stroke="#eeeeee" stroke-width="1.0"/>
<line x1="330.5" y1="805.5" x2="330.5" y2="875.6" stroke="#eeeeee" stroke-width="1.0"/>
<path d="M30.4,846.9 L41.9,841.1 L70.8,838.2 L105.4,832.4 L134.3,832.4 L151.6,846.9 L163.2,858.4 L186.2,844.0 L215.1,835.3 L238.2,828.4 L267.1,828.4 L295.9,829.6 L333.4,828.4" fill="none" stroke="#8aa6f7" stroke-width="1.8" stroke-linejoin="round"/>
<text x="181.0" y="909.0" font-size="4.8" text-anchor="middle" fill="#a0a0a0">Water Level (ft)</text>
<line x1="33.0" y1="922.9" x2="332.0" y2="922.9" stroke="#eeeeee" stroke-width="1.0"/>
<line x1="33.0" y1="935.7" x2="332.0" y2="935.7" stroke="#eeeeee" stroke-width="1.0"/>
<line x1="33.0" y1="950.4" x2="332.0" y2="950.4" stroke="#eeeeee" stroke-width="1.0"/>
<line x1="33.0" y1="963.8" x2="332.0" y2="963.8" stroke="#eeeeee" stroke-width="1.0"/>
<line x1="33.0" y1="977.2" x2="332.0" y2="977.2" stroke="#eeeeee" stroke-width="1.0"/>
<line x1="33.0" y1="990.7" x2="332.0" y2="990.7" stroke="#eeeeee" stroke-width="1.0"/>
<line x1="39.1" y1="922.9" x2="39.1" y2="990.7" stroke="#eeeeee" stroke-width="1.0"/>
<line x1="73.7" y1="922.9" x2="73.7" y2="990.7" stroke="#eeeeee" stroke-width="1.0"/>
<line x1="105.4" y1="922.9" x2="105.4" y2="990.7" stroke="#eeeeee" stroke-width="1.0"/>
<line x1="137.2" y1="922.9" x2="137.2" y2="990.7" stroke="#eeeeee" stroke-width="1.0"/>
<line x1="170.1" y1="922.9" x2="170.1" y2="990.7" stroke="#eeeeee" stroke-width="1.0"/>
<line x1="202.4" y1="922.9" x2="202.4" y2="990.7" stroke="#eeeeee" stroke-width="1.0"/>
<line x1="234.2" y1="922.9" x2="234.2" y2="990.7" stroke="#eeeeee" stroke-width="1.0"/>
<line x1="267.1" y1="922.9" x2="267.1" y2="990.7" stroke="#eeeeee" stroke-width="1.0"/>
<line x1="298.8" y1="922.9" x2="298.8" y2="990.7" stroke="#eeeeee" stroke-width="1.0"/>
<line x1="330.5" y1="922.9" x2="330.5" y2="990.7" stroke="#eeeeee" stroke-width="1.0"/>
<path d="M33.3,956.1 L41.9,947.4 L47.7,964.7 L53.5,970.5 L62.1,956.1 L70.8,979.2 L79.5,964.7 L91.0,959.0 L99.7,961.9 L108.3,956.1 L119.9,970.5 L131.4,938.8 L137.2,961.9 L145.8,950.3 L154.5,973.4 L168.9,979.2 L186.2,967.6 L203.6,959.0 L215.1,953.2 L226.6,956.1 L238.2,944.5 L249.7,947.4 L261.3,933.0 L267.1,924.3 L275.7,956.1 L284.4,935.9 L295.9,947.4 L304.6,938.8 L316.1,961.9 L324.8,956.1 L333.4,950.3" fill="none" stroke="#8aa6f7" stroke-width="2.2" stroke-linejoin="round"/>
<text x="29.0" y="698.3" font-size="4.5" text-anchor="end" fill="#a0a0a0">1,000</text>
<text x="29.0" y="712.9" font-size="4.5" text-anchor="end" fill="#a0a0a0">1,000</text>
<text x="29.0" y="727.0" font-size="4.5" text-anchor="end" fill="#a0a0a0">1,000</text>
<text x="29.0" y="741.6" font-size="4.5" text-anchor="end" fill="#a0a0a0">1,000</text>
<text x="29.0" y="756.2" font-size="4.5" text-anchor="end" fill="#a0a0a0">1,000</text>
<text x="29.0" y="770.2" font-size="4.5" text-anchor="end" fill="#a0a0a0">1,000</text>
<text x="29.0" y="816.9" font-size="4.5" text-anchor="end" fill="#a0a0a0">1,000</text>
<text x="29.0" y="830.9" font-size="4.5" text-anchor="end" fill="#a0a0a0">1,000</text>
<text x="29.0" y="845.5" font-size="4.5" text-anchor="end" fill="#a0a0a0">1,000</text>
<text x="29.0" y="860.1" font-size="4.5" text-anchor="end" fill="#a0a0a0">1,000</text>
<text x="29.0" y="874.2" font-size="4.5" text-anchor="end" fill="#a0a0a0">1,000</text>
<text x="29.0" y="924.4" font-size="4.5" text-anchor="end" fill="#a0a0a0">1,000</text>
<text x="29.0" y="937.2" font-size="4.5" text-anchor="end" fill="#a0a0a0">1,000</text>
<text x="29.0" y="951.9" font-size="4.5" text-anchor="end" fill="#a0a0a0">1,000</text>
<text x="29.0" y="965.3" font-size="4.5" text-anchor="end" fill="#a0a0a0">1,000</text>
<text x="29.0" y="978.7" font-size="4.5" text-anchor="end" fill="#a0a0a0">1,000</text>
<text x="29.0" y="992.2" font-size="4.5" text-anchor="end" fill="#a0a0a0">1,000</text>
<text x="39.1" y="769.7" font-size="4.2" text-anchor="middle" fill="#a0a0a0">Jul 1</text>
<text x="73.7" y="769.7" font-size="4.2" text-anchor="middle" fill="#a0a0a0">Jul 1</text>
<text x="105.4" y="769.7" font-size="4.2" text-anchor="middle" fill="#a0a0a0">Jul 1</text>
<text x="137.2" y="769.7" font-size="4.2" text-anchor="middle" fill="#a0a0a0">Jul 1</text>
<text x="170.1" y="769.7" font-size="4.2" text-anchor="middle" fill="#a0a0a0">Jul 1</text>
<text x="202.4" y="769.7" font-size="4.2" text-anchor="middle" fill="#a0a0a0">Jul 1</text>
<text x="234.2" y="769.7" font-size="4.2" text-anchor="middle" fill="#a0a0a0">Jul 1</text>
<text x="267.1" y="769.7" font-size="4.2" text-anchor="middle" fill="#a0a0a0">Jul 1</text>
<text x="298.8" y="769.7" font-size="4.2" text-anchor="middle" fill="#a0a0a0">Jul 1</text>
<text x="330.5" y="769.7" font-size="4.2" text-anchor="middle" fill="#a0a0a0">Jul 1</text>
<text x="39.1" y="881.8" font-size="4.2" text-anchor="middle" fill="#a0a0a0">Jul 1</text>
<text x="73.7" y="881.8" font-size="4.2" text-anchor="middle" fill="#a0a0a0">Jul 1</text>
<text x="105.4" y="881.8" font-size="4.2" text-anchor="middle" fill="#a0a0a0">Jul 1</text>
<text x="137.2" y="881.8" font-size="4.2" text-anchor="middle" fill="#a0a0a0">Jul 1</text>
<text x="170.1" y="881.8" font-size="4.2" text-anchor="middle" fill="#a0a0a0">Jul 1</text>
<text x="202.4" y="881.8" font-size="4.2" text-anchor="middle" fill="#a0a0a0">Jul 1</text>
<text x="234.2" y="881.8" font-size="4.2" text-anchor="middle" fill="#a0a0a0">Jul 1</text>
<text x="267.1" y="881.8" font-size="4.2" text-anchor="middle" fill="#a0a0a0">Jul 1</text>
<text x="298.8" y="881.8" font-size="4.2" text-anchor="middle" fill="#a0a0a0">Jul 1</text>
<text x="330.5" y="881.8" font-size="4.2" text-anchor="middle" fill="#a0a0a0">Jul 1</text>
<text x="39.1" y="993.4" font-size="4.2" text-anchor="middle" fill="#a0a0a0">Jul 1</text>
<text x="73.7" y="993.4" font-size="4.2" text-anchor="middle" fill="#a0a0a0">Jul 1</text>
<text x="105.4" y="993.4" font-size="4.2" text-anchor="middle" fill="#a0a0a0">Jul 1</text>
<text x="137.2" y="993.4" font-size="4.2" text-anchor="middle" fill="#a0a0a0">Jul 1</text>
<text x="170.1" y="993.4" font-size="4.2" text-anchor="middle" fill="#a0a0a0">Jul 1</text>
<text x="202.4" y="993.4" font-size="4.2" text-anchor="middle" fill="#a0a0a0">Jul 1</text>
<text x="234.2" y="993.4" font-size="4.2" text-anchor="middle" fill="#a0a0a0">Jul 1</text>
<text x="267.1" y="993.4" font-size="4.2" text-anchor="middle" fill="#a0a0a0">Jul 1</text>
<text x="298.8" y="993.4" font-size="4.2" text-anchor="middle" fill="#a0a0a0">Jul 1</text>
<text x="330.5" y="993.4" font-size="4.2" text-anchor="middle" fill="#a0a0a0">Jul 1</text>
<line x1="36.0" y1="781.6" x2="42.0" y2="781.6" stroke="#8aa6f7" stroke-width="1.5"/>
<text x="45.0" y="783.1" font-size="4" text-anchor="start" fill="#a0a0a0">DW 26</text>
<line x1="36.0" y1="892.6" x2="42.0" y2="892.6" stroke="#8aa6f7" stroke-width="1.5"/>
<text x="45.0" y="894.1" font-size="4" text-anchor="start" fill="#a0a0a0">DW 26</text>
<line x1="36.0" y1="1005.3" x2="42.0" y2="1005.3" stroke="#8aa6f7" stroke-width="1.5"/>
<text x="45.0" y="1006.8" font-size="4" text-anchor="start" fill="#a0a0a0">DW 26</text>
<line x1="36.0" y1="557.9" x2="42.0" y2="557.9" stroke="#8aa6f7" stroke-width="1.5"/>
<text x="45.0" y="559.4" font-size="4" text-anchor="start" fill="#a0a0a0">DW 26</text>
<text x="33.0" y="552.0" font-size="4.2" text-anchor="middle" fill="#a0a0a0">Jul 1</text>
<text x="66.2" y="552.0" font-size="4.2" text-anchor="middle" fill="#a0a0a0">Jul 1</text>
<text x="99.4" y="552.0" font-size="4.2" text-anchor="middle" fill="#a0a0a0">Jul 1</text>
<text x="132.6" y="552.0" font-size="4.2" text-anchor="middle" fill="#a0a0a0">Jul 1</text>
<text x="165.8" y="552.0" font-size="4.2" text-anchor="middle" fill="#a0a0a0">Jul 1</text>
<text x="199.0" y="552.0" font-size="4.2" text-anchor="middle" fill="#a0a0a0">Jul 1</text>
<text x="232.2" y="552.0" font-size="4.2" text-anchor="middle" fill="#a0a0a0">Jul 1</text>
<text x="265.4" y="552.0" font-size="4.2" text-anchor="middle" fill="#a0a0a0">Jul 1</text>
<text x="298.6" y="552.0" font-size="4.2" text-anchor="middle" fill="#a0a0a0">Jul 1</text>
<text x="331.8" y="552.0" font-size="4.2" text-anchor="middle" fill="#a0a0a0">Jul 1</text>
</g></defs></svg>
<div id="side">
  <div id="thumbb"><svg width="61.3" height="180.6" viewBox="0 0 358 1055" style="display:block"><use href="#pg"/></svg></div>
  <svg style="position:absolute;left:74px;top:201px" width="6" height="10" viewBox="0 0 6 10"><path d="M1.9,3.2 L3.6,2 L3.6,7.6" fill="none" stroke="#e4e4e4" stroke-width="0.95" stroke-linejoin="miter"/></svg>
</div>
<div id="div"></div>
<div id="main"><div id="page"><svg width="358" height="1055" viewBox="0 0 358 1055" style="display:block;will-change:transform;opacity:0.999"><use href="#pg"/></svg></div></div>
<div id="tbl"></div>
<div style="position:absolute;left:685px;top:27px;width:2px;height:420px;background:#1b1b1b;z-index:3"></div><div style="position:absolute;left:687px;top:27px;width:1px;height:420px;background:#3a3a3a;z-index:3"></div>
<div id="tb">
  <svg style="position:absolute;left:7px;top:7px" width="8" height="8" viewBox="0 0 8 8"><rect x="0" y="0.85" width="8" height="4.2" fill="#9c9c9c"/><rect x="0" y="6" width="8" height="1" fill="#c4c4c4"/></svg>
  <div class="t" style="left:29px;top:7.5px;font-size:7.95px;-webkit-text-stroke:0.3px #fff;">Hydro Data (1).pdf</div>
  <div style="position:absolute;left:313px;top:5px;width:13px;height:11.5px;background:#1f1f1f;"></div>
  <svg style="position:absolute;left:316px;top:6px" width="6" height="10" viewBox="0 0 6 10"><path d="M2.6,3.4 L4.3,2.3 L4.3,7.5" fill="none" stroke="#eeeeee" stroke-width="0.95"/></svg>
  <svg style="position:absolute;left:326px;top:6px" width="7" height="10" viewBox="0 0 7 10"><path d="M2.3,8.4 L5.2,2.3" fill="none" stroke="#dddddd" stroke-width="0.9"/></svg>
  <svg style="position:absolute;left:334px;top:6px" width="6" height="10" viewBox="0 0 6 10"><path d="M2.6,3.4 L4.3,2.3 L4.3,7.5" fill="none" stroke="#eeeeee" stroke-width="0.95"/></svg>
  <div style="position:absolute;left:353px;top:5.3px;width:1px;height:11.5px;background:#5a5a5a;"></div>
  <div style="position:absolute;left:361.5px;top:10.5px;width:6.5px;height:1px;background:#e0e0e0;"></div>
  <div style="position:absolute;left:376.7px;top:4.9px;width:24px;height:12px;background:#1f1f1f;"></div>
  <div class="t" style="left:381.5px;top:7px;font-size:7.3px;color:#f0f0f0">80%</div>
  <div style="position:absolute;left:409.3px;top:10.9px;width:6px;height:1px;background:#e0e0e0;"></div>
  <div style="position:absolute;left:411.8px;top:8.5px;width:1px;height:6px;background:#e0e0e0;"></div>
  <div style="position:absolute;left:424px;top:5.3px;width:1px;height:11.5px;background:#5a5a5a;"></div>
  <svg style="position:absolute;left:434px;top:4px" width="14" height="14" viewBox="0 0 14 14"><rect x="2.65" y="2.85" width="6.3" height="8.7" rx="1.4" fill="none" stroke="#d4d4d4" stroke-width="1.3"/><path d="M4.7,5.3 L5.8,4.3 L6.9,5.3 Z M4.7,9.1 L5.8,10.1 L6.9,9.1 Z" fill="#c8c8c8"/></svg>
  <svg style="position:absolute;left:450px;top:4px" width="16" height="14" viewBox="0 0 16 14"><path d="M3,7.5 L5.6,4.9 L8.2,7.5 L5.6,10.1 Z" fill="none" stroke="#dcdcdc" stroke-width="1.1" stroke-linejoin="round"/><path d="M8.9,4.3 A3.7,3.7 0 1 1 7.6,11.3" fill="none" stroke="#dcdcdc" stroke-width="1.1"/><path d="M9.9,2 L7.1,4 L9.9,5.9 Z" fill="#dcdcdc"/></svg>
  <div style="position:absolute;left:474px;top:5.3px;width:1px;height:11.5px;background:#5a5a5a;"></div>
  <svg style="position:absolute;left:482px;top:6px" width="10" height="10" viewBox="0 0 10 10"><path d="M2.1,1.3 L2.3,2.9 Q1.2,4.9 1.9,5.9 Q2.7,6.6 3.9,5.4 L5.5,4.1 Q7.4,3.9 8.4,5.2 Q7.6,8 5.6,7.9 Q4.2,7.5 5,6.3 L6.3,5.6" fill="none" stroke="#e8e8e8" stroke-width="1.15" stroke-linecap="round" stroke-linejoin="round"/></svg>
  <div style="position:absolute;left:499px;top:5.3px;width:1px;height:11.5px;background:#5a5a5a;"></div>
  <svg style="position:absolute;left:508px;top:7px" width="10" height="9" viewBox="0 0 10 9"><path d="M2.6,3.3 H5.4 A2.1,2.1 0 0 1 5.4,7.5 H1.8" fill="none" stroke="#8c8c8c" stroke-width="1.15"/><path d="M0.8,3.3 L3,1.1 L3,5.5 Z" fill="#8c8c8c"/></svg>
  <svg style="position:absolute;left:525px;top:7px" width="10" height="9" viewBox="0 0 10 9"><path d="M7.4,3.3 H4.4 A2.1,2.1 0 0 0 4.4,7.5 H8" fill="none" stroke="#8c8c8c" stroke-width="1.15"/><path d="M9.1,3.3 L6.9,1.1 L6.9,5.5 Z" fill="#8c8c8c"/></svg>
</div>
</body></html>
